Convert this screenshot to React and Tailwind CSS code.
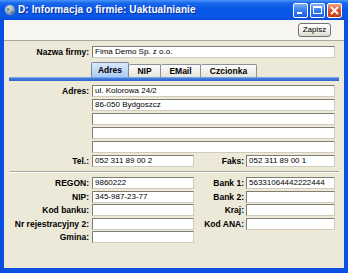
import React from 'react';

const Label = ({ children, className = '' }) => (
  <div className={`text-right font-bold text-[8.5px] leading-[12px] text-black whitespace-nowrap ${className}`}>
    {children}
  </div>
);

const Field = ({ value, className = '' }) => (
  <div
    className={`h-[12px] bg-white border border-t-[#7f7d74] border-l-[#7f7d74] border-b-[#cfccbd] border-r-[#cfccbd] pl-[2px] text-[8px] leading-[10px] text-black whitespace-nowrap overflow-hidden ${className}`}
  >
    {value}
  </div>
);

const Tab = ({ label, active, className = '' }) => (
  <div
    className={
      active
        ? `h-[15px] flex items-center justify-center font-bold text-[8.5px] text-black border border-b-0 border-[#7c8a99] rounded-t-[2px] bg-[linear-gradient(to_bottom,#d9e9fb,#a9cbf2)] ${className}`
        : `h-[13px] flex items-center justify-center font-bold text-[8.5px] text-black border border-b-0 border-l-0 border-[#8b9197] rounded-t-[2px] bg-[linear-gradient(to_bottom,#fcfcfb,#e6e4dc)] ${className}`
    }
  >
    {label}
  </div>
);

const TitleButton = ({ kind }) => {
  const bg =
    kind === 'close'
      ? 'bg-[linear-gradient(to_bottom,#f0a78e,#e0562c_45%,#c63d13)]'
      : 'bg-[linear-gradient(to_bottom,#7fb2fa,#3a80f2_45%,#1c5fe3)]';
  return (
    <div className={`w-[15px] h-[15px] rounded-[2px] border border-white flex items-center justify-center ${bg}`}>
      {kind === 'min' && <div className="w-[5px] h-[2px] bg-white mt-[6px] mr-[3px]" />}
      {kind === 'max' && <div className="w-[9px] h-[8px] border border-white border-t-2" />}
      {kind === 'close' && (
        <svg width="9" height="9" viewBox="0 0 9 9">
          <path d="M1.5 1.5 L7.5 7.5 M7.5 1.5 L1.5 7.5" stroke="white" strokeWidth="1.8" strokeLinecap="round" />
        </svg>
      )}
    </div>
  );
};

export default function App() {
  return (
    <div className="w-[348px] h-[273px] flex flex-col bg-[#0a4fe2] font-['Liberation_Sans',Arial,sans-serif] overflow-hidden">
      {/* title bar */}
      <div className="h-[20px] flex items-center px-[4px] bg-[linear-gradient(to_bottom,#4a95f8_0%,#1a68ec_15%,#0756e5_45%,#0b58e8_85%,#0a48d6_100%)]">
        <svg width="12" height="12" viewBox="0 0 12 12" className="mr-[2px]">
          <defs>
            <radialGradient id="g" cx="0.4" cy="0.35" r="0.7">
              <stop offset="0" stopColor="#e8eef5" />
              <stop offset="0.6" stopColor="#8fa6c0" />
              <stop offset="1" stopColor="#4e6a8c" />
            </radialGradient>
          </defs>
          <circle cx="6" cy="6" r="5.3" fill="url(#g)" />
          <path d="M3 4 Q5 3 6 5 Q5 7 3.5 7.5 Z M7 7 Q9 6.5 9.5 8 Q8 9.5 7 9 Z" fill="#3f7a4a" opacity="0.7" />
        </svg>
        <span className="text-white font-bold text-[10px] leading-none tracking-[0.1px] [text-shadow:1px_1px_0_#0a2f9a]">
          D: Informacja o firmie: Uaktualnianie
        </span>
        <div className="ml-auto flex gap-[2px] mr-[2px]">
          <TitleButton kind="min" />
          <TitleButton kind="max" />
          <TitleButton kind="close" />
        </div>
      </div>

      {/* window body */}
      <div className="flex-1 mx-[4px] mb-[5px] flex flex-col bg-[#ece9d8]">
        {/* toolbar */}
        <div className="h-[21px] flex items-center justify-end pr-[13px] bg-[#f6f5f0] border-b border-[#aca899]">
          <div className="w-[33px] h-[14px] flex items-center justify-center rounded-[3px] border border-[#6f7377] bg-[linear-gradient(to_bottom,#ffffff,#f0efe8_60%,#dcd9cc)] text-[8px] text-black">
            Zapisz
          </div>
        </div>

        {/* Nazwa firmy */}
        <div className="flex mt-[5px]">
          <Label className="w-[85px]">Nazwa firmy:</Label>
          <Field value="Fima Demo Sp. z o.o." className="ml-[3px] w-[243px]" />
        </div>

        {/* tabs */}
        <div className="flex items-end mt-[4px] ml-[87px] h-[15px]">
          <Tab label="Adres" active className="w-[38px]" />
          <Tab label="NIP" className="w-[32px]" />
          <Tab label="EMail" className="w-[40px]" />
          <Tab label="Czcionka" className="w-[56px]" />
        </div>
        <div className="ml-[5px] w-[330px] h-[4px] bg-[linear-gradient(to_bottom,#8fb8f2,#3f79d9_40%,#2e64c6)]" />

        {/* address */}
        <div className="flex flex-col gap-[2px] mt-[4px]">
          <div className="flex">
            <Label className="w-[85px]">Adres:</Label>
            <Field value="ul. Kolorowa 24/2" className="ml-[3px] w-[243px]" />
          </div>
          <div className="flex">
            <div className="w-[85px]" />
            <Field value="86-050 Bydgoszcz" className="ml-[3px] w-[243px]" />
          </div>
          <div className="flex">
            <div className="w-[85px]" />
            <Field value="" className="ml-[3px] w-[243px]" />
          </div>
          <div className="flex">
            <div className="w-[85px]" />
            <Field value="" className="ml-[3px] w-[243px]" />
          </div>
          <div className="flex">
            <div className="w-[85px]" />
            <Field value="" className="ml-[3px] w-[243px]" />
          </div>
          <div className="flex">
            <Label className="w-[85px]">Tel.:</Label>
            <Field value="052 311 89 00 2" className="ml-[3px] w-[102px]" />
            <Label className="w-[50px]">Faks:</Label>
            <Field value="052 311 89 00 1" className="ml-[2px] w-[89px]" />
          </div>
        </div>

        {/* separator */}
        <div className="ml-[5px] w-[330px] mt-[4px] border-t border-[#aca899] border-b border-b-white" />

        {/* bottom fields */}
        <div className="flex flex-col gap-[1.5px] mt-[4px]">
          <div className="flex">
            <Label className="w-[85px]">REGON:</Label>
            <Field value="9860222" className="ml-[3px] w-[102px]" />
            <Label className="w-[50px]">Bank 1:</Label>
            <Field value="56331064442222444" className="ml-[2px] w-[89px]" />
          </div>
          <div className="flex">
            <Label className="w-[85px]">NIP:</Label>
            <Field value="345-987-23-77" className="ml-[3px] w-[102px]" />
            <Label className="w-[50px]">Bank 2:</Label>
            <Field value="" className="ml-[2px] w-[89px]" />
          </div>
          <div className="flex">
            <Label className="w-[85px]">Kod banku:</Label>
            <Field value="" className="ml-[3px] w-[102px]" />
            <Label className="w-[50px]">Kraj:</Label>
            <Field value="" className="ml-[2px] w-[89px]" />
          </div>
          <div className="flex">
            <Label className="w-[85px]">Nr rejestracyjny 2:</Label>
            <Field value="" className="ml-[3px] w-[102px]" />
            <Label className="w-[50px]">Kod ANA:</Label>
            <Field value="" className="ml-[2px] w-[89px]" />
          </div>
          <div className="flex">
            <Label className="w-[85px]">Gmina:</Label>
            <Field value="" className="ml-[3px] w-[102px]" />
          </div>
        </div>
      </div>
    </div>
  );
}
